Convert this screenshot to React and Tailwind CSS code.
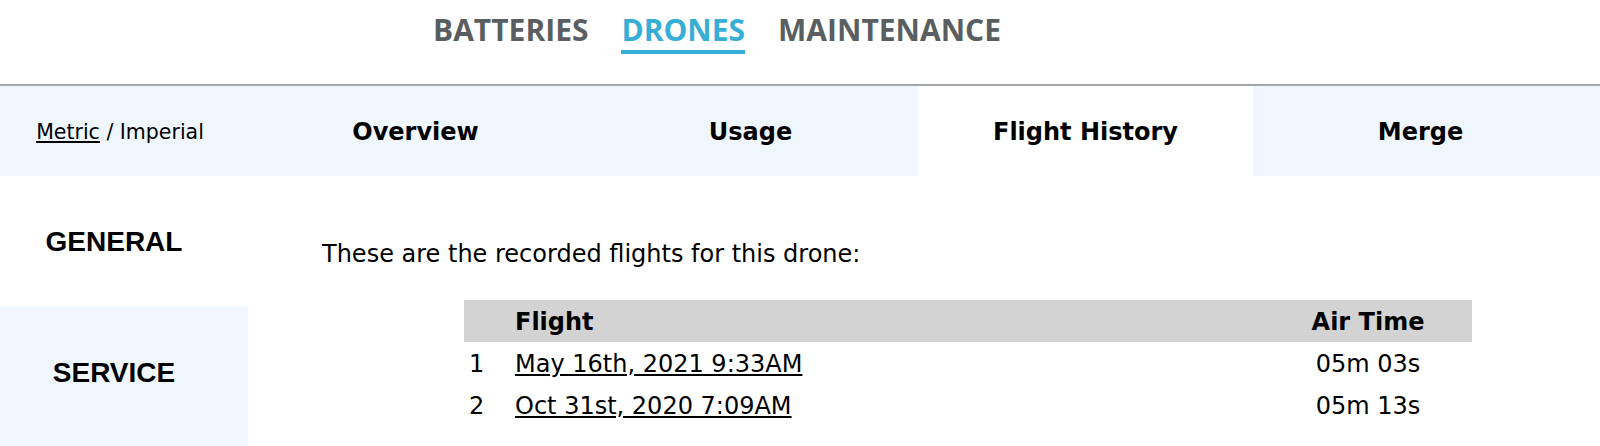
export default function App() {
  const navItems = [
    { label: "BATTERIES", active: false },
    { label: "DRONES", active: true },
    { label: "MAINTENANCE", active: false }
  ];

  const tabs = [
    { label: "Overview", active: false },
    { label: "Usage", active: false },
    { label: "Flight History", active: true },
    { label: "Merge", active: false }
  ];

  const flights = [
    { n: 1, date: "May 16th, 2021 9:33AM", air: "05m 03s" },
    { n: 2, date: "Oct 31st, 2020 7:09AM", air: "05m 13s" }
  ];

  return (
    <div className="w-[1600px] h-[446px] overflow-hidden bg-white text-black font-['DejaVu_Sans',Verdana,sans-serif]">
      {/* top nav */}
      <nav className="h-[86px] border-b-2 border-[#a3a7ab] flex items-start gap-[33px] pl-[433px] pt-[10px] font-['Open_Sans',sans-serif] font-bold text-[30px] leading-[40px]">
        {navItems.map((item) => (
          <span
            key={item.label}
            className={
              item.active
                ? "text-[#37aed5] border-b-[4px] border-[#37aed5]"
                : "text-[#5b5e61]"
            }
          >
            {item.label}
          </span>
        ))}
      </nav>

      {/* tab bar */}
      <div className="h-[90px] bg-[#f0f6fd] flex">
        <div className="w-[248px] flex items-center justify-center text-[20.5px] pr-[8px] pt-[2px]">
          <span className="underline underline-offset-2">Metric</span>
          <span>&nbsp;/ Imperial</span>
        </div>
        {tabs.map((tab) => (
          <div
            key={tab.label}
            className={`w-[335px] flex items-center justify-center font-bold text-[24px] pt-[2px] ${
              tab.active ? "bg-white" : ""
            }`}
          >
            {tab.label}
          </div>
        ))}
      </div>

      <div className="flex">
        {/* sidebar */}
        <div className="w-[248px] flex flex-col font-['Liberation_Sans',Arial,sans-serif] font-bold text-[28px] leading-[28px]">
          <div className="h-[130px] flex items-center justify-center pr-[20px] pt-[2px]">GENERAL</div>
          <div className="h-[140px] bg-[#f0f6fd] flex justify-center pt-[53px] pr-[20px]">SERVICE</div>
        </div>

        {/* content */}
        <div className="flex-1 pl-[74px] pt-[63px]">
          <p className="text-[24px] leading-[30px]">These are the recorded flights for this drone:</p>
          <div className="mt-[31px] ml-[142px] w-[1008px] text-[24px]">
            <div className="h-[42px] bg-[#d3d3d3] grid grid-cols-[51px_1fr_208px] items-center font-bold pt-[1px]">
              <span></span>
              <span>Flight</span>
              <span className="text-center">Air Time</span>
            </div>
            {flights.map((f) => (
              <div key={f.n} className="h-[42px] grid grid-cols-[51px_1fr_208px] items-center pt-[1px]">
                <span className="pl-[5px]">{f.n}</span>
                <span>
                  <a className="underline underline-offset-2">{f.date}</a>
                </span>
                <span className="text-center">{f.air}</span>
              </div>
            ))}
          </div>
        </div>
      </div>
    </div>
  );
}
